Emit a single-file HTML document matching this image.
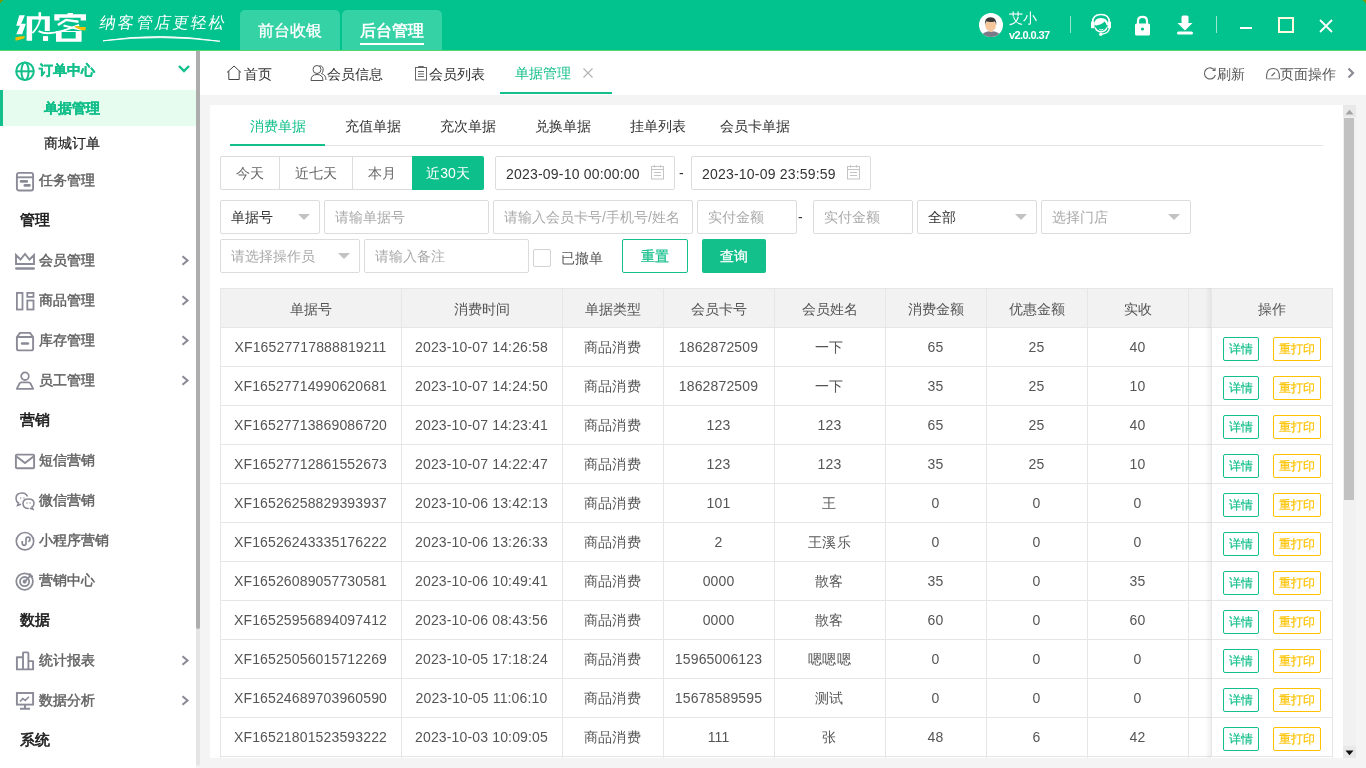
<!DOCTYPE html>
<html><head><meta charset="utf-8">
<style>
*{box-sizing:border-box;margin:0;padding:0}
html,body{width:1366px;height:768px;overflow:hidden;background:#f4f4f4;font-family:"Liberation Sans",sans-serif;color:#333}
.a{position:absolute}
#hdr{left:0;top:0;width:1366px;height:50px;background:#02c28d}
#hdrline{left:0;top:50px;width:1366px;height:1px;background:#55d56c}
.htab{top:10px;height:40px;background:#35d2a5;border-radius:5px 5px 0 0;color:#fff;font-size:16px;text-align:center;line-height:41px}
#side{left:0;top:51px;width:196px;height:717px;background:#fff}
#sbar{left:196px;top:51px;width:4px;height:715px;background:#e5e5e5;border-radius:0 0 2px 2px}
#sthumb{left:196px;top:51px;width:4px;height:578px;background:#adadad;border-radius:0 0 2px 2px}
#tabbar{left:200px;top:51px;width:1166px;height:44px;background:#fff}
#card{left:210px;top:105px;width:1133px;height:653px;background:#fff;overflow:hidden}
.tb{font-size:14px;color:#333;top:64px;height:20px;line-height:20px}
.si{left:0;width:196px;height:36px;font-size:14px;line-height:36px}
.st{left:39px;font-weight:500;color:#626262;-webkit-text-stroke:0.45px #626262}
.sh{left:20px;font-size:15px;font-weight:500;color:#1c1c1c;-webkit-text-stroke:0.6px #1c1c1c}
.sub{top:116px;font-size:14px;line-height:20px;color:#333}
.btx{top:156px;height:34px;line-height:34px;text-align:center;font-size:14px;color:#666}
.inp{border:1px solid #dcdcdc;border-radius:2px;background:#fff}
.ph{font-size:14px;line-height:20px;color:#aaa}
.th{top:289px;height:39px;line-height:40px;text-align:center;font-size:14px;color:#555}
.td{height:39px;line-height:41px;text-align:center;font-size:14px;color:#555;letter-spacing:0.15px}
.bd,.by{height:24px;line-height:23px;font-size:12px;font-weight:500;-webkit-text-stroke:0.2px;border:1px solid #13bf8a;color:#13bf8a;border-radius:2px;text-align:center;width:36px;background:#fff}
.by{border-color:#fec200;color:#fec200;width:48px}
.arr{left:181px;width:9px;height:11px}
</style></head><body><div id="wrap" style="position:absolute;left:0;top:0;width:1366px;height:768px;will-change:transform">
<div id="hdr" class="a"></div>
<div id="hdrline" class="a"></div>
<div class="a htab" style="left:240px;width:100px;font-weight:500;-webkit-text-stroke:0.3px #fff">前台收银</div>
<div class="a htab" style="left:342px;width:100px;font-weight:bold">后台管理</div>
<div class="a" style="left:360px;top:43px;width:64px;height:2px;background:#fff"></div>
<svg class="a" style="left:0;top:0" width="5" height="5"><path d="M0 0 H4 Q1 1 0 4Z" fill="#7a9800"/></svg>
<svg class="a" style="left:1361px;top:0" width="5" height="5"><path d="M5 0 H1 Q4 1 5 4Z" fill="#7a9800"/></svg>
<!-- logo -->
<svg class="a" style="left:10px;top:5px" width="85" height="43" viewBox="0 0 85 43" fill="#fff"><path d="M9.3 10.3 L14.9 10.3 L11.2 18.7 L15.9 18.7 L12.1 29.2 L6.2 29.2 L10.0 20.8 L6.2 20.8Z"/><path d="M16.8 11.2 L39.8 11.2 L39.8 26.1 L34.8 26.1 L34.8 14.6 L22.1 14.6 L22.1 35.8 L16.5 35.8Z"/><path d="M28.5 7.2 L31.1 7.2 L31.1 15.6 L28.5 15.6Z"/><path d="M33.0 31.1 L38.1 31.1 L38.1 36.0 L33.0 36.0Z"/><path d="M57.6 8.0 L63.0 8.0 L63.0 10.6 L57.6 10.6Z"/><path d="M44.3 9.3 L76.0 9.3 L76.0 15.6 L70.6 15.6 L70.6 12.8 L49.5 12.8 L49.5 15.6 L44.3 15.6Z"/><path d="M46.0 26.1 L71.6 26.1 L71.6 36.7 L46.0 36.7Z M51.6 27.1 L51.6 33.6 L65.7 33.6 L65.7 27.1Z"/><path d="M29.9 15.6 Q27.4 23.6 22.4 28.0" stroke="#fff" stroke-width="1.8" fill="none"/><path d="M28.6 26.1 Q39.8 32.4 69.1 19.9" stroke="#fff" stroke-width="2" fill="none"/><path d="M47.9 19.9 L56.0 14.9 L68.5 16.8" stroke="#fff" stroke-width="2.4" fill="none"/><path d="M53.5 20.5 L71.6 24.9" stroke="#fff" stroke-width="2" fill="none"/><path d="M5.3 32.4 Q10.6 31.1 15.2 31.4 L14.0 33.6 Q9.3 34.8 5.6 35.8Z" fill="#f6c000"/><path d="M64.1 21.5 Q67.8 20.5 70.3 22.1 L75.9 22.1 L75.3 25.5 Q69.7 25.5 64.1 21.5Z" fill="#f6c000"/></svg>
<div class="a" style="left:100px;top:10px;width:140px;height:26px;color:#fff;font-size:16px;line-height:26px;font-weight:300;letter-spacing:2.2px;transform:skewX(-10deg);transform-origin:0 50%">纳客管店更轻松</div>
<svg class="a" style="left:100px;top:33px" width="124" height="10" viewBox="0 0 124 10"><path d="M3 7.8 Q60 -1 120 8.3 Q60 1.2 3 7.8Z" stroke="#fff" stroke-width="0.9" fill="#fff"/></svg>
<!-- header right -->
<svg class="a" style="left:979px;top:13px" width="24" height="24" viewBox="0 0 24 24">
<circle cx="12" cy="12" r="12" fill="#fff"/>
<clipPath id="cc"><circle cx="12" cy="12" r="12"/></clipPath>
<g clip-path="url(#cc)">
<path d="M1 25 Q3 18.3 12 18.3 Q21 18.3 23 25Z" fill="#7b7a88"/>
<rect x="10.5" y="15" width="3" height="4" fill="#f3c29b"/>
<ellipse cx="11.6" cy="12.6" rx="5.3" ry="5.6" fill="#f5c59c"/>
<path d="M6 12.5 Q5 4.2 11.6 4.2 Q18 4.2 17.2 12.2 Q16.6 8.8 15.8 8.4 Q12 9.6 7.2 8.6 Q6.4 10 6 12.5Z" fill="#3a3a3a"/>
</g></svg>
<div class="a" style="left:1009px;top:9px;color:#fff;font-size:14px;line-height:18px">艾小</div>
<div class="a" style="left:1009px;top:29px;color:#fff;font-size:11px;line-height:13px;font-weight:bold;letter-spacing:-0.6px">v2.0.0.37</div>
<div class="a" style="left:1070px;top:16px;width:1px;height:17px;background:rgba(255,255,255,.6)"></div>
<svg class="a" style="left:1085px;top:10px" width="35" height="30" viewBox="1085 10 35 30">
<path d="M1092.6 22.5 Q1092.6 14.5 1101 14.5 Q1109.4 14.5 1109.4 22.5" stroke="#fff" stroke-width="1.6" fill="none"/>
<rect x="1091" y="21.6" width="3.6" height="6.6" rx="0.8" fill="#fff"/><rect x="1107.4" y="21.6" width="3.6" height="6.6" rx="0.8" fill="#fff"/>
<path d="M1094.3 25 Q1094 18 1101 18 Q1108 18 1107.8 25 L1106.5 25 Q1106 22 1104.2 21.5 Q1103 24 1096.5 25.6 Z" fill="#fff"/>
<path d="M1095.2 27.5 Q1096.5 31.8 1101 31.8 Q1105.5 31.8 1106.8 27.5" stroke="#fff" stroke-width="1.4" fill="none"/>
<path d="M1099.3 29.3 Q1101.2 30.6 1103.3 29.3" stroke="#fff" stroke-width="1" fill="none"/>
<path d="M1109.5 28 Q1108.5 33.6 1101.5 34.2" stroke="#fff" stroke-width="1.4" fill="none"/>
<circle cx="1100.8" cy="34.2" r="1.7" fill="#fff"/>
</svg>
<svg class="a" style="left:1134px;top:15px" width="17" height="21" viewBox="0 0 17 21">
<path d="M4 9 V6 Q4 1.8 8.5 1.8 Q13 1.8 13 6 V9" stroke="#fff" stroke-width="2.2" fill="none"/>
<rect x="1" y="8.5" width="15" height="12" rx="1.5" fill="#fff"/><circle cx="8.5" cy="14" r="1.6" fill="#02c28d"/>
</svg>
<svg class="a" style="left:1176px;top:15px" width="18" height="20" viewBox="0 0 18 20">
<rect x="5.5" y="0.5" width="7" height="8" rx="1.5" fill="#fff"/><path d="M1.5 8 H16.5 L9 15.5Z" fill="#fff"/>
<rect x="1" y="16.5" width="16" height="3" rx="1.5" fill="#fff"/>
</svg>
<div class="a" style="left:1216px;top:16px;width:1px;height:17px;background:rgba(255,255,255,.6)"></div>
<div class="a" style="left:1240px;top:27px;width:12px;height:2px;background:#fff"></div>
<div class="a" style="left:1278px;top:17px;width:16px;height:16px;border:2px solid #fcfbe0"></div>
<svg class="a" style="left:1319px;top:19px" width="14" height="14" viewBox="0 0 14 14"><path d="M1 1 L13 13 M13 1 L1 13" stroke="#fff" stroke-width="1.8"/></svg>


<div id="side" class="a"></div>
<div id="sbar" class="a"></div>
<div id="sthumb" class="a"></div>
<!-- sidebar -->
<svg class="a" style="left:14px;top:61px" width="22" height="22" viewBox="0 0 22 22" fill="none" stroke="#13bf8a" stroke-width="2">
<circle cx="11" cy="10.3" r="8.8"/><ellipse cx="11" cy="10.3" rx="3.6" ry="8.8"/><path d="M2.2 10.3 H19.8"/></svg>
<div class="a" style="left:39px;top:60px;font-size:14px;line-height:20px;font-weight:bold;color:#13bf8a;-webkit-text-stroke:0.3px #13bf8a">订单中心</div>
<svg class="a" style="left:177px;top:64px" width="14" height="10" viewBox="0 0 14 10"><path d="M2 2 L7 7 L12 2" stroke="#13bf8a" stroke-width="2.4" fill="none"/></svg>
<div class="a" style="left:0;top:90px;width:196px;height:36px;background:#e6fcee"></div>
<div class="a" style="left:0;top:90px;width:3px;height:36px;background:#13bf8a"></div>
<div class="a" style="left:44px;top:98px;font-size:14px;line-height:20px;font-weight:bold;color:#13bf8a;-webkit-text-stroke:0.3px #13bf8a">单据管理</div>
<div class="a" style="left:44px;top:133px;font-size:14px;line-height:20px;font-weight:500;color:#222;-webkit-text-stroke:0.2px #222">商城订单</div>

<svg class="a" style="left:15px;top:171px" width="20" height="21" viewBox="0 0 20 21" fill="none" stroke="#8b8b98" stroke-width="1.9">
<rect x="1.9" y="1.9" width="16.2" height="17.6" rx="2"/><path d="M2 6.3 H18"/><path d="M6 10.4 H11.8 M9.8 14.4 H14.5" stroke-width="2.6" stroke-linecap="round"/></svg>
<div class="a st" style="top:170px;font-size:14px;line-height:20px">任务管理</div>

<div class="a sh" style="top:210px;line-height:20px">管理</div>

<svg class="a" style="left:14px;top:252px" width="22" height="19" viewBox="0 0 22 19" fill="none" stroke="#8b8b98" stroke-width="1.9">
<path d="M2 3 L2 12 H20 L20 3 L15.5 7.5 L11 2 L6.5 7.5 Z" stroke-linejoin="miter"/><path d="M2.3 16.5 H19.7" stroke-width="2.4" stroke-linecap="round"/></svg>
<div class="a st" style="top:250px;font-size:14px;line-height:20px">会员管理</div>
<svg class="a arr" style="top:255px" viewBox="0 0 9 11"><path d="M1.5 1.2 L6.5 5.5 L1.5 9.8" stroke="#8b8b98" stroke-width="2.1" fill="none"/></svg>

<svg class="a" style="left:15px;top:291px" width="20" height="20" viewBox="0 0 20 20" fill="none" stroke="#8b8b98" stroke-width="1.8">
<rect x="1.9" y="1.9" width="5.6" height="16.6"/><rect x="12.3" y="1.9" width="6.2" height="4"/><rect x="12.3" y="9.5" width="6.2" height="9"/></svg>
<div class="a st" style="top:290px;font-size:14px;line-height:20px">商品管理</div>
<svg class="a arr" style="top:295px" viewBox="0 0 9 11"><path d="M1.5 1.2 L6.5 5.5 L1.5 9.8" stroke="#8b8b98" stroke-width="2.1" fill="none"/></svg>

<svg class="a" style="left:15px;top:331px" width="20" height="21" viewBox="0 0 20 21" fill="none" stroke="#8b8b98" stroke-width="1.9">
<path d="M1.9 6 L5 1.9 H15 L18.1 6 Z" stroke-linejoin="round"/><path d="M1.9 6 V17.5 Q1.9 19.4 3.8 19.4 H16.2 Q18.1 19.4 18.1 17.5 V6"/><path d="M7 12.5 H13" stroke-width="2.4" stroke-linecap="round"/></svg>
<div class="a st" style="top:330px;font-size:14px;line-height:20px">库存管理</div>
<svg class="a arr" style="top:335px" viewBox="0 0 9 11"><path d="M1.5 1.2 L6.5 5.5 L1.5 9.8" stroke="#8b8b98" stroke-width="2.1" fill="none"/></svg>

<svg class="a" style="left:15px;top:371px" width="20" height="20" viewBox="0 0 20 20" fill="none" stroke="#8b8b98" stroke-width="1.8">
<circle cx="10" cy="5.2" r="3.8"/><path d="M1.8 17.8 L4.5 12.5 Q5 11.3 6.5 11.3 H13.5 Q15 11.3 15.5 12.5 L18.2 17.8 Z" stroke-linejoin="round"/></svg>
<div class="a st" style="top:370px;font-size:14px;line-height:20px">员工管理</div>
<svg class="a arr" style="top:375px" viewBox="0 0 9 11"><path d="M1.5 1.2 L6.5 5.5 L1.5 9.8" stroke="#8b8b98" stroke-width="2.1" fill="none"/></svg>

<div class="a sh" style="top:410px;line-height:20px">营销</div>

<svg class="a" style="left:14px;top:453px" width="22" height="17" viewBox="0 0 22 17" fill="none" stroke="#8b8b98" stroke-width="1.9">
<rect x="1.9" y="1.6" width="18.2" height="13.6" rx="1"/><path d="M2.5 3.5 L11 10 L19.5 3.5"/></svg>
<div class="a st" style="top:450px;font-size:14px;line-height:20px">短信营销</div>

<svg class="a" style="left:14px;top:491px" width="22" height="20" viewBox="0 0 22 20" fill="none" stroke="#8b8b98" stroke-width="1.6">
<path d="M13.5 5.5 Q12 2 8 2 Q2 2 2 7.5 Q2 10.5 4.5 12 L3.6 14.5 L7 13.2"/><path d="M14.8 17.5 Q9 17.5 9 12.5 Q9 8 14.5 8 Q20 8 20 12.5 Q20 15 18 16 L19 18.3 L15.8 17.3" /><path d="M6.2 7 H7.2 M9.5 7 H10.5 M12.5 12 H13.5 M15.5 12 H16.5" stroke-width="1.4"/></svg>
<div class="a st" style="top:490px;font-size:14px;line-height:20px">微信营销</div>

<svg class="a" style="left:15px;top:531px" width="20" height="20" viewBox="0 0 20 20" fill="none" stroke="#8b8b98" stroke-width="1.7">
<circle cx="10" cy="10.2" r="8.7"/><path d="M7.2 10 V12 Q7.2 14.3 9.2 14.3 Q11 14.3 11 12 V8.4 Q11 6.2 13 6.2 Q15 6.2 15 8.2 Q15 10.4 13.2 10.4"/></svg>
<div class="a st" style="top:530px;font-size:14px;line-height:20px">小程序营销</div>

<svg class="a" style="left:15px;top:571px" width="20" height="20" viewBox="0 0 20 20" fill="none" stroke="#8b8b98" stroke-width="1.8">
<circle cx="9.6" cy="10.6" r="8.3"/><circle cx="9.6" cy="10.6" r="4.6"/><circle cx="9.6" cy="10.6" r="1.2" fill="#8b8b98"/><path d="M9.8 10.4 L16.5 3.7 M14.8 2.2 V5.4 H18"/></svg>
<div class="a st" style="top:570px;font-size:14px;line-height:20px">营销中心</div>

<div class="a sh" style="top:610px;line-height:20px">数据</div>

<svg class="a" style="left:15px;top:651px" width="20" height="20" viewBox="0 0 20 20" fill="none" stroke="#8b8b98" stroke-width="1.9">
<path d="M1.9 18.4 V6.3 H8 V18.4 Z M8 18.4 V2.2 Q8 1.4 9 1.4 H12.5 Q13.4 1.4 13.4 2.2 V18.4 M13.4 10.1 H18.1 V18.4 H1.9" stroke-linejoin="round"/></svg>
<div class="a st" style="top:650px;font-size:14px;line-height:20px">统计报表</div>
<svg class="a arr" style="top:655px" viewBox="0 0 9 11"><path d="M1.5 1.2 L6.5 5.5 L1.5 9.8" stroke="#8b8b98" stroke-width="2.1" fill="none"/></svg>

<svg class="a" style="left:15px;top:691px" width="20" height="20" viewBox="0 0 20 20" fill="none" stroke="#8b8b98" stroke-width="1.9">
<rect x="1.9" y="2" width="16.2" height="11.6"/><path d="M10 13.6 V17.8 M5 17.8 H15" stroke-width="2"/><path d="M5 10.5 L7.8 7.6 L10.3 9.4 L14 5.8" stroke-width="1.6"/></svg>
<div class="a st" style="top:690px;font-size:14px;line-height:20px">数据分析</div>
<svg class="a arr" style="top:695px" viewBox="0 0 9 11"><path d="M1.5 1.2 L6.5 5.5 L1.5 9.8" stroke="#8b8b98" stroke-width="2.1" fill="none"/></svg>

<div class="a sh" style="top:730px;line-height:20px">系统</div>

<div id="tabbar" class="a"></div>
<div id="card" class="a"></div>
<!-- tabbar -->
<svg class="a" style="left:226px;top:65px" width="16" height="16" viewBox="0 0 16 16" fill="none" stroke="#444" stroke-width="1"><path d="M1 7.5 L8 1 L15 7.5 M2.8 6 V14.5 H13.2 V6"/></svg>
<div class="a tb" style="left:244px">首页</div>
<svg class="a" style="left:310px;top:64px" width="18" height="18" viewBox="0 0 18 18" fill="none" stroke="#555" stroke-width="1"><circle cx="7" cy="5.5" r="4"/><path d="M1 16.5 Q1 10.5 7 10.5 Q13 10.5 13 16.5 Z"/><path d="M9.5 1.8 Q14 1.8 13 7 Q12.5 9 11.5 9.5 Q16 11 16 16"/></svg>
<div class="a tb" style="left:327px">会员信息</div>
<svg class="a" style="left:414px;top:65px" width="14" height="16" viewBox="0 0 14 16" fill="none" stroke="#666" stroke-width="1"><rect x="1.5" y="2.5" width="11" height="12.5"/><path d="M4.5 2.5 V1.5 H9.5 V2.5 M4 6.5 H10 M4 9 H10 M4 11.5 H10"/></svg>
<div class="a tb" style="left:429px">会员列表</div>
<div class="a tb" style="left:515px;top:63px;color:#13bf8a">单据管理</div>
<svg class="a" style="left:582px;top:67px" width="12" height="12" viewBox="0 0 12 12"><path d="M1.5 1.5 L10.5 10.5 M10.5 1.5 L1.5 10.5" stroke="#b5b5b5" stroke-width="1.2"/></svg>
<div class="a" style="left:500px;top:92px;width:112px;height:2px;background:#13bf8a"></div>
<svg class="a" style="left:1203px;top:66px" width="14" height="15" viewBox="0 0 14 15" fill="none" stroke="#666" stroke-width="1.1"><path d="M11.8 4.5 A5.6 5.6 0 1 0 12.4 9"/><path d="M9.5 4.5 H12 V1.8"/></svg>
<div class="a tb" style="left:1217px;color:#555">刷新</div>
<svg class="a" style="left:1265px;top:66px" width="16" height="15" viewBox="0 0 16 15" fill="none" stroke="#666" stroke-width="1.1"><path d="M1.5 12.5 Q1 2.5 8 2.5 Q15 2.5 14.5 12.5 Z"/><path d="M6.5 10 L10 6.5"/><path d="M1.5 13 H14.5" stroke="#ccc" stroke-width="1.5"/></svg>
<div class="a tb" style="left:1280px;color:#555">页面操作</div>
<svg class="a" style="left:1346px;top:67px" width="10" height="12" viewBox="0 0 10 12"><path d="M2.5 1.5 L7 6 L2.5 10.5" stroke="#8b8b98" stroke-width="2.2" fill="none"/></svg>
<!-- card -->
<div class="a sub" style="left:250px;color:#13bf8a">消费单据</div>
<div class="a sub" style="left:345px">充值单据</div>
<div class="a sub" style="left:440px">充次单据</div>
<div class="a sub" style="left:535px">兑换单据</div>
<div class="a sub" style="left:630px">挂单列表</div>
<div class="a sub" style="left:720px">会员卡单据</div>
<div class="a" style="left:230px;top:145px;width:1093px;height:1px;background:#e4e4e4"></div>
<div class="a" style="left:230px;top:144px;width:95px;height:2px;background:#13bf8a"></div>
<div class="a" style="left:220px;top:156px;width:264px;height:34px;border:1px solid #dcdcdc;border-radius:2px"></div>
<div class="a" style="left:279px;top:157px;width:1px;height:32px;background:#dcdcdc"></div>
<div class="a" style="left:352px;top:157px;width:1px;height:32px;background:#dcdcdc"></div>
<div class="a" style="left:412px;top:156px;width:72px;height:34px;background:#0dc08b;border-radius:0 2px 2px 0"></div>
<div class="a btx" style="left:220px;width:59px">今天</div>
<div class="a btx" style="left:280px;width:72px">近七天</div>
<div class="a btx" style="left:353px;width:58px">本月</div>
<div class="a btx" style="left:412px;width:72px;color:#fff">近30天</div>
<div class="a inp" style="left:495px;top:156px;width:180px;height:34px"></div>
<div class="a" style="left:506px;top:164px;font-size:14px;line-height:20px;color:#333;letter-spacing:0.2px">2023-09-10 00:00:00</div>
<div class="a" style="left:679px;top:163px;font-size:14px;line-height:20px;color:#333">-</div>
<div class="a inp" style="left:691px;top:156px;width:180px;height:34px"></div>
<div class="a" style="left:702px;top:164px;font-size:14px;line-height:20px;color:#333;letter-spacing:0.2px">2023-10-09 23:59:59</div>
<svg class="a" style="left:650px;top:164px" width="15" height="16" viewBox="0 0 15 16" fill="none" stroke="#c4c4c4" stroke-width="1"><rect x="1.5" y="2.5" width="12" height="12.5"/><path d="M1.5 5.5 H13.5 M4.5 1 V3.5 M10.5 1 V3.5 M4 8.5 H11 M4 11.5 H11"/></svg>
<svg class="a" style="left:846px;top:164px" width="15" height="16" viewBox="0 0 15 16" fill="none" stroke="#c4c4c4" stroke-width="1"><rect x="1.5" y="2.5" width="12" height="12.5"/><path d="M1.5 5.5 H13.5 M4.5 1 V3.5 M10.5 1 V3.5 M4 8.5 H11 M4 11.5 H11"/></svg>
<div class="a inp" style="left:220px;top:200px;width:100px;height:34px"></div>
<div class="a ph" style="left:231px;top:207px;color:#333">单据号</div>
<svg class="a" style="left:297px;top:213px" width="14" height="8" viewBox="0 0 14 8"><path d="M1 1 H13 L7 7 Z" fill="#c2c2c2"/></svg>
<div class="a inp" style="left:324px;top:200px;width:165px;height:34px"></div>
<div class="a ph" style="left:335px;top:207px">请输单据号</div>
<div class="a inp" style="left:493px;top:200px;width:200px;height:34px"></div>
<div class="a ph" style="left:504px;top:207px">请输入会员卡号/手机号/姓名</div>
<div class="a inp" style="left:697px;top:200px;width:100px;height:34px"></div>
<div class="a ph" style="left:708px;top:207px">实付金额</div>
<div class="a" style="left:798px;top:207px;font-size:14px;line-height:20px;color:#333">-</div>
<div class="a inp" style="left:813px;top:200px;width:100px;height:34px"></div>
<div class="a ph" style="left:824px;top:207px">实付金额</div>
<div class="a inp" style="left:917px;top:200px;width:120px;height:34px"></div>
<div class="a ph" style="left:928px;top:207px;color:#333">全部</div>
<svg class="a" style="left:1014px;top:213px" width="14" height="8" viewBox="0 0 14 8"><path d="M1 1 H13 L7 7 Z" fill="#c2c2c2"/></svg>
<div class="a inp" style="left:1041px;top:200px;width:150px;height:34px"></div>
<div class="a ph" style="left:1052px;top:207px">选择门店</div>
<svg class="a" style="left:1167px;top:213px" width="14" height="8" viewBox="0 0 14 8"><path d="M1 1 H13 L7 7 Z" fill="#c2c2c2"/></svg>
<div class="a inp" style="left:220px;top:239px;width:140px;height:34px"></div>
<div class="a ph" style="left:231px;top:246px">请选择操作员</div>
<svg class="a" style="left:337px;top:252px" width="14" height="8" viewBox="0 0 14 8"><path d="M1 1 H13 L7 7 Z" fill="#c2c2c2"/></svg>
<div class="a inp" style="left:364px;top:239px;width:165px;height:34px"></div>
<div class="a ph" style="left:375px;top:246px">请输入备注</div>
<div class="a" style="left:533px;top:249px;width:18px;height:18px;border:1px solid #d2d2d2;border-radius:2px;background:#fff"></div>
<div class="a" style="left:561px;top:248px;font-size:14px;line-height:20px;color:#555">已撤单</div>
<div class="a" style="left:622px;top:239px;width:66px;height:34px;border:1px solid #13bf8a;border-radius:2px;color:#13bf8a;font-size:14px;line-height:32px;text-align:center;font-weight:500;-webkit-text-stroke:0.25px #13bf8a">重置</div>
<div class="a" style="left:702px;top:239px;width:64px;height:34px;background:#13bf8a;border-radius:2px;color:#fff;font-size:14px;line-height:34px;text-align:center;font-weight:500;-webkit-text-stroke:0.3px #fff">查询</div>
<div class="a" style="left:220px;top:288px;width:1113px;height:39px;background:#f2f2f2"></div>
<div class="a" style="left:220px;top:288px;width:1113px;height:1px;background:#e6e6e6"></div>
<div class="a" style="left:220px;top:327px;width:1113px;height:1px;background:#e6e6e6"></div>
<div class="a" style="left:220px;top:366px;width:1113px;height:1px;background:#e6e6e6"></div>
<div class="a" style="left:220px;top:405px;width:1113px;height:1px;background:#e6e6e6"></div>
<div class="a" style="left:220px;top:444px;width:1113px;height:1px;background:#e6e6e6"></div>
<div class="a" style="left:220px;top:483px;width:1113px;height:1px;background:#e6e6e6"></div>
<div class="a" style="left:220px;top:522px;width:1113px;height:1px;background:#e6e6e6"></div>
<div class="a" style="left:220px;top:561px;width:1113px;height:1px;background:#e6e6e6"></div>
<div class="a" style="left:220px;top:600px;width:1113px;height:1px;background:#e6e6e6"></div>
<div class="a" style="left:220px;top:639px;width:1113px;height:1px;background:#e6e6e6"></div>
<div class="a" style="left:220px;top:678px;width:1113px;height:1px;background:#e6e6e6"></div>
<div class="a" style="left:220px;top:717px;width:1113px;height:1px;background:#e6e6e6"></div>
<div class="a" style="left:220px;top:756px;width:1113px;height:1px;background:#e6e6e6"></div>
<div class="a" style="left:220px;top:288px;width:1px;height:470px;background:#e6e6e6"></div>
<div class="a" style="left:401px;top:288px;width:1px;height:470px;background:#e6e6e6"></div>
<div class="a" style="left:562px;top:288px;width:1px;height:470px;background:#e6e6e6"></div>
<div class="a" style="left:663px;top:288px;width:1px;height:470px;background:#e6e6e6"></div>
<div class="a" style="left:774px;top:288px;width:1px;height:470px;background:#e6e6e6"></div>
<div class="a" style="left:885px;top:288px;width:1px;height:470px;background:#e6e6e6"></div>
<div class="a" style="left:986px;top:288px;width:1px;height:470px;background:#e6e6e6"></div>
<div class="a" style="left:1087px;top:288px;width:1px;height:470px;background:#e6e6e6"></div>
<div class="a" style="left:1188px;top:288px;width:1px;height:470px;background:#e6e6e6"></div>
<div class="a" style="left:1332px;top:288px;width:1px;height:470px;background:#e6e6e6"></div>
<div class="a th" style="left:220px;width:181px">单据号</div>
<div class="a th" style="left:401px;width:161px">消费时间</div>
<div class="a th" style="left:562px;width:101px">单据类型</div>
<div class="a th" style="left:663px;width:111px">会员卡号</div>
<div class="a th" style="left:774px;width:111px">会员姓名</div>
<div class="a th" style="left:885px;width:101px">消费金额</div>
<div class="a th" style="left:986px;width:101px">优惠金额</div>
<div class="a th" style="left:1087px;width:101px">实收</div>
<div class="a td" style="left:220px;top:327px;width:181px">XF16527717888819211</div>
<div class="a td" style="left:401px;top:327px;width:161px">2023-10-07 14:26:58</div>
<div class="a td" style="left:562px;top:327px;width:101px">商品消费</div>
<div class="a td" style="left:663px;top:327px;width:111px">1862872509</div>
<div class="a td" style="left:774px;top:327px;width:111px">一下</div>
<div class="a td" style="left:885px;top:327px;width:101px">65</div>
<div class="a td" style="left:986px;top:327px;width:101px">25</div>
<div class="a td" style="left:1087px;top:327px;width:101px">40</div>
<div class="a td" style="left:220px;top:366px;width:181px">XF16527714990620681</div>
<div class="a td" style="left:401px;top:366px;width:161px">2023-10-07 14:24:50</div>
<div class="a td" style="left:562px;top:366px;width:101px">商品消费</div>
<div class="a td" style="left:663px;top:366px;width:111px">1862872509</div>
<div class="a td" style="left:774px;top:366px;width:111px">一下</div>
<div class="a td" style="left:885px;top:366px;width:101px">35</div>
<div class="a td" style="left:986px;top:366px;width:101px">25</div>
<div class="a td" style="left:1087px;top:366px;width:101px">10</div>
<div class="a td" style="left:220px;top:405px;width:181px">XF16527713869086720</div>
<div class="a td" style="left:401px;top:405px;width:161px">2023-10-07 14:23:41</div>
<div class="a td" style="left:562px;top:405px;width:101px">商品消费</div>
<div class="a td" style="left:663px;top:405px;width:111px">123</div>
<div class="a td" style="left:774px;top:405px;width:111px">123</div>
<div class="a td" style="left:885px;top:405px;width:101px">65</div>
<div class="a td" style="left:986px;top:405px;width:101px">25</div>
<div class="a td" style="left:1087px;top:405px;width:101px">40</div>
<div class="a td" style="left:220px;top:444px;width:181px">XF16527712861552673</div>
<div class="a td" style="left:401px;top:444px;width:161px">2023-10-07 14:22:47</div>
<div class="a td" style="left:562px;top:444px;width:101px">商品消费</div>
<div class="a td" style="left:663px;top:444px;width:111px">123</div>
<div class="a td" style="left:774px;top:444px;width:111px">123</div>
<div class="a td" style="left:885px;top:444px;width:101px">35</div>
<div class="a td" style="left:986px;top:444px;width:101px">25</div>
<div class="a td" style="left:1087px;top:444px;width:101px">10</div>
<div class="a td" style="left:220px;top:483px;width:181px">XF16526258829393937</div>
<div class="a td" style="left:401px;top:483px;width:161px">2023-10-06 13:42:13</div>
<div class="a td" style="left:562px;top:483px;width:101px">商品消费</div>
<div class="a td" style="left:663px;top:483px;width:111px">101</div>
<div class="a td" style="left:774px;top:483px;width:111px">王</div>
<div class="a td" style="left:885px;top:483px;width:101px">0</div>
<div class="a td" style="left:986px;top:483px;width:101px">0</div>
<div class="a td" style="left:1087px;top:483px;width:101px">0</div>
<div class="a td" style="left:220px;top:522px;width:181px">XF16526243335176222</div>
<div class="a td" style="left:401px;top:522px;width:161px">2023-10-06 13:26:33</div>
<div class="a td" style="left:562px;top:522px;width:101px">商品消费</div>
<div class="a td" style="left:663px;top:522px;width:111px">2</div>
<div class="a td" style="left:774px;top:522px;width:111px">王溪乐</div>
<div class="a td" style="left:885px;top:522px;width:101px">0</div>
<div class="a td" style="left:986px;top:522px;width:101px">0</div>
<div class="a td" style="left:1087px;top:522px;width:101px">0</div>
<div class="a td" style="left:220px;top:561px;width:181px">XF16526089057730581</div>
<div class="a td" style="left:401px;top:561px;width:161px">2023-10-06 10:49:41</div>
<div class="a td" style="left:562px;top:561px;width:101px">商品消费</div>
<div class="a td" style="left:663px;top:561px;width:111px">0000</div>
<div class="a td" style="left:774px;top:561px;width:111px">散客</div>
<div class="a td" style="left:885px;top:561px;width:101px">35</div>
<div class="a td" style="left:986px;top:561px;width:101px">0</div>
<div class="a td" style="left:1087px;top:561px;width:101px">35</div>
<div class="a td" style="left:220px;top:600px;width:181px">XF16525956894097412</div>
<div class="a td" style="left:401px;top:600px;width:161px">2023-10-06 08:43:56</div>
<div class="a td" style="left:562px;top:600px;width:101px">商品消费</div>
<div class="a td" style="left:663px;top:600px;width:111px">0000</div>
<div class="a td" style="left:774px;top:600px;width:111px">散客</div>
<div class="a td" style="left:885px;top:600px;width:101px">60</div>
<div class="a td" style="left:986px;top:600px;width:101px">0</div>
<div class="a td" style="left:1087px;top:600px;width:101px">60</div>
<div class="a td" style="left:220px;top:639px;width:181px">XF16525056015712269</div>
<div class="a td" style="left:401px;top:639px;width:161px">2023-10-05 17:18:24</div>
<div class="a td" style="left:562px;top:639px;width:101px">商品消费</div>
<div class="a td" style="left:663px;top:639px;width:111px">15965006123</div>
<div class="a td" style="left:774px;top:639px;width:111px">嗯嗯嗯</div>
<div class="a td" style="left:885px;top:639px;width:101px">0</div>
<div class="a td" style="left:986px;top:639px;width:101px">0</div>
<div class="a td" style="left:1087px;top:639px;width:101px">0</div>
<div class="a td" style="left:220px;top:678px;width:181px">XF16524689703960590</div>
<div class="a td" style="left:401px;top:678px;width:161px">2023-10-05 11:06:10</div>
<div class="a td" style="left:562px;top:678px;width:101px">商品消费</div>
<div class="a td" style="left:663px;top:678px;width:111px">15678589595</div>
<div class="a td" style="left:774px;top:678px;width:111px">测试</div>
<div class="a td" style="left:885px;top:678px;width:101px">0</div>
<div class="a td" style="left:986px;top:678px;width:101px">0</div>
<div class="a td" style="left:1087px;top:678px;width:101px">0</div>
<div class="a td" style="left:220px;top:717px;width:181px">XF16521801523593222</div>
<div class="a td" style="left:401px;top:717px;width:161px">2023-10-03 10:09:05</div>
<div class="a td" style="left:562px;top:717px;width:101px">商品消费</div>
<div class="a td" style="left:663px;top:717px;width:111px">111</div>
<div class="a td" style="left:774px;top:717px;width:111px">张</div>
<div class="a td" style="left:885px;top:717px;width:101px">48</div>
<div class="a td" style="left:986px;top:717px;width:101px">6</div>
<div class="a td" style="left:1087px;top:717px;width:101px">42</div>
<div class="a" style="left:1205px;top:288px;width:6px;height:470px;background:linear-gradient(to right,rgba(0,0,0,0),rgba(0,0,0,.06))"></div>
<div class="a" style="left:1211px;top:288px;width:122px;height:40px;background:#f2f2f2;border-left:1px solid #e6e6e6;border-bottom:1px solid #e6e6e6;border-top:1px solid #e6e6e6"></div>
<div class="a th" style="left:1211px;width:122px">操作</div>
<div class="a" style="left:1211px;top:327px;width:122px;height:40px;background:#fff;border:1px solid #e6e6e6;border-right:0"></div>
<div class="a bd" style="left:1223px;top:337px">详情</div>
<div class="a by" style="left:1273px;top:337px">重打印</div>
<div class="a" style="left:1211px;top:366px;width:122px;height:40px;background:#fff;border:1px solid #e6e6e6;border-right:0"></div>
<div class="a bd" style="left:1223px;top:376px">详情</div>
<div class="a by" style="left:1273px;top:376px">重打印</div>
<div class="a" style="left:1211px;top:405px;width:122px;height:40px;background:#fff;border:1px solid #e6e6e6;border-right:0"></div>
<div class="a bd" style="left:1223px;top:415px">详情</div>
<div class="a by" style="left:1273px;top:415px">重打印</div>
<div class="a" style="left:1211px;top:444px;width:122px;height:40px;background:#fff;border:1px solid #e6e6e6;border-right:0"></div>
<div class="a bd" style="left:1223px;top:454px">详情</div>
<div class="a by" style="left:1273px;top:454px">重打印</div>
<div class="a" style="left:1211px;top:483px;width:122px;height:40px;background:#fff;border:1px solid #e6e6e6;border-right:0"></div>
<div class="a bd" style="left:1223px;top:493px">详情</div>
<div class="a by" style="left:1273px;top:493px">重打印</div>
<div class="a" style="left:1211px;top:522px;width:122px;height:40px;background:#fff;border:1px solid #e6e6e6;border-right:0"></div>
<div class="a bd" style="left:1223px;top:532px">详情</div>
<div class="a by" style="left:1273px;top:532px">重打印</div>
<div class="a" style="left:1211px;top:561px;width:122px;height:40px;background:#fff;border:1px solid #e6e6e6;border-right:0"></div>
<div class="a bd" style="left:1223px;top:571px">详情</div>
<div class="a by" style="left:1273px;top:571px">重打印</div>
<div class="a" style="left:1211px;top:600px;width:122px;height:40px;background:#fff;border:1px solid #e6e6e6;border-right:0"></div>
<div class="a bd" style="left:1223px;top:610px">详情</div>
<div class="a by" style="left:1273px;top:610px">重打印</div>
<div class="a" style="left:1211px;top:639px;width:122px;height:40px;background:#fff;border:1px solid #e6e6e6;border-right:0"></div>
<div class="a bd" style="left:1223px;top:649px">详情</div>
<div class="a by" style="left:1273px;top:649px">重打印</div>
<div class="a" style="left:1211px;top:678px;width:122px;height:40px;background:#fff;border:1px solid #e6e6e6;border-right:0"></div>
<div class="a bd" style="left:1223px;top:688px">详情</div>
<div class="a by" style="left:1273px;top:688px">重打印</div>
<div class="a" style="left:1211px;top:717px;width:122px;height:40px;background:#fff;border:1px solid #e6e6e6;border-right:0"></div>
<div class="a bd" style="left:1223px;top:727px">详情</div>
<div class="a by" style="left:1273px;top:727px">重打印</div>
<div class="a" style="left:1332px;top:288px;width:1px;height:470px;background:#e6e6e6"></div>
<div class="a" style="left:1343px;top:105px;width:13px;height:653px;background:#f1f1f1"></div>
<div class="a" style="left:1343px;top:105px;width:13px;height:12px;background:#e8e8e8"></div>
<svg class="a" style="left:1345px;top:109px" width="9" height="6" viewBox="0 0 9 6"><path d="M0.5 5.5 L4.5 0.8 L8.5 5.5Z" fill="#a3a3a3"/></svg>
<div class="a" style="left:1344px;top:118px;width:10px;height:382px;background:#c1c1c1"></div>
<div class="a" style="left:1343px;top:746px;width:13px;height:12px;background:#e8e8e8"></div>
<svg class="a" style="left:1345px;top:750px" width="9" height="6" viewBox="0 0 9 6"><path d="M0.5 0.5 L4.5 5.2 L8.5 0.5Z" fill="#111"/></svg>
</div></body></html>
